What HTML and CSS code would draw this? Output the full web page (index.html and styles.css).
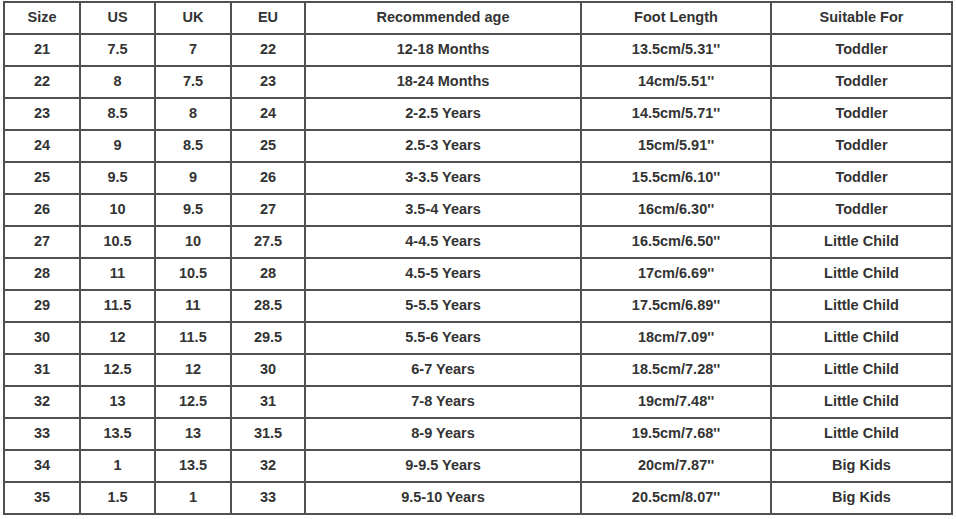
FILE: index.html
```html
<!DOCTYPE html>
<html>
<head>
<meta charset="utf-8">
<link rel="stylesheet" href="styles.css">
</head>
<body>
<table class="size-table">
  <colgroup>
    <col class="c1"><col class="c2"><col class="c3"><col class="c4"><col class="c5"><col class="c6"><col class="c7">
  </colgroup>
  <thead>
    <tr><th>Size</th><th>US</th><th>UK</th><th>EU</th><th>Recommended age</th><th>Foot Length</th><th>Suitable For</th></tr>
  </thead>
  <tbody>
    <tr><td>21</td><td>7.5</td><td>7</td><td>22</td><td>12-18 Months</td><td>13.5cm/5.31''</td><td>Toddler</td></tr>
    <tr><td>22</td><td>8</td><td>7.5</td><td>23</td><td>18-24 Months</td><td>14cm/5.51''</td><td>Toddler</td></tr>
    <tr><td>23</td><td>8.5</td><td>8</td><td>24</td><td>2-2.5 Years</td><td>14.5cm/5.71''</td><td>Toddler</td></tr>
    <tr><td>24</td><td>9</td><td>8.5</td><td>25</td><td>2.5-3 Years</td><td>15cm/5.91''</td><td>Toddler</td></tr>
    <tr><td>25</td><td>9.5</td><td>9</td><td>26</td><td>3-3.5 Years</td><td>15.5cm/6.10''</td><td>Toddler</td></tr>
    <tr><td>26</td><td>10</td><td>9.5</td><td>27</td><td>3.5-4 Years</td><td>16cm/6.30''</td><td>Toddler</td></tr>
    <tr><td>27</td><td>10.5</td><td>10</td><td>27.5</td><td>4-4.5 Years</td><td>16.5cm/6.50''</td><td>Little Child</td></tr>
    <tr><td>28</td><td>11</td><td>10.5</td><td>28</td><td>4.5-5 Years</td><td>17cm/6.69''</td><td>Little Child</td></tr>
    <tr><td>29</td><td>11.5</td><td>11</td><td>28.5</td><td>5-5.5 Years</td><td>17.5cm/6.89''</td><td>Little Child</td></tr>
    <tr><td>30</td><td>12</td><td>11.5</td><td>29.5</td><td>5.5-6 Years</td><td>18cm/7.09''</td><td>Little Child</td></tr>
    <tr><td>31</td><td>12.5</td><td>12</td><td>30</td><td>6-7 Years</td><td>18.5cm/7.28''</td><td>Little Child</td></tr>
    <tr><td>32</td><td>13</td><td>12.5</td><td>31</td><td>7-8 Years</td><td>19cm/7.48''</td><td>Little Child</td></tr>
    <tr><td>33</td><td>13.5</td><td>13</td><td>31.5</td><td>8-9 Years</td><td>19.5cm/7.68''</td><td>Little Child</td></tr>
    <tr><td>34</td><td>1</td><td>13.5</td><td>32</td><td>9-9.5 Years</td><td>20cm/7.87''</td><td>Big Kids</td></tr>
    <tr><td>35</td><td>1.5</td><td>1</td><td>33</td><td>9.5-10 Years</td><td>20.5cm/8.07''</td><td>Big Kids</td></tr>
  </tbody>
</table>
</body>
</html>
```
FILE: styles.css
```css
html, body {
  margin: 0;
  padding: 0;
  background: #fff;
}
body {
  padding: 1px 0 0 3px;
}
.size-table {
  border-collapse: collapse;
  table-layout: fixed;
  width: 950px;
  font-family: "Liberation Sans", Arial, sans-serif;
  font-size: 14.5px;
  font-weight: bold;
  color: #333;
}
.size-table th,
.size-table td {
  border: 2px solid #505050;
  height: 28px;
  padding: 0 0 2px 0;
  text-align: center;
  vertical-align: middle;
  font-weight: bold;
}
.c1 { width: 76px; }
.c2 { width: 75px; }
.c3 { width: 76px; }
.c4 { width: 74px; }
.c5 { width: 276px; }
.c6 { width: 190px; }
.c7 { width: 181px; }
```
